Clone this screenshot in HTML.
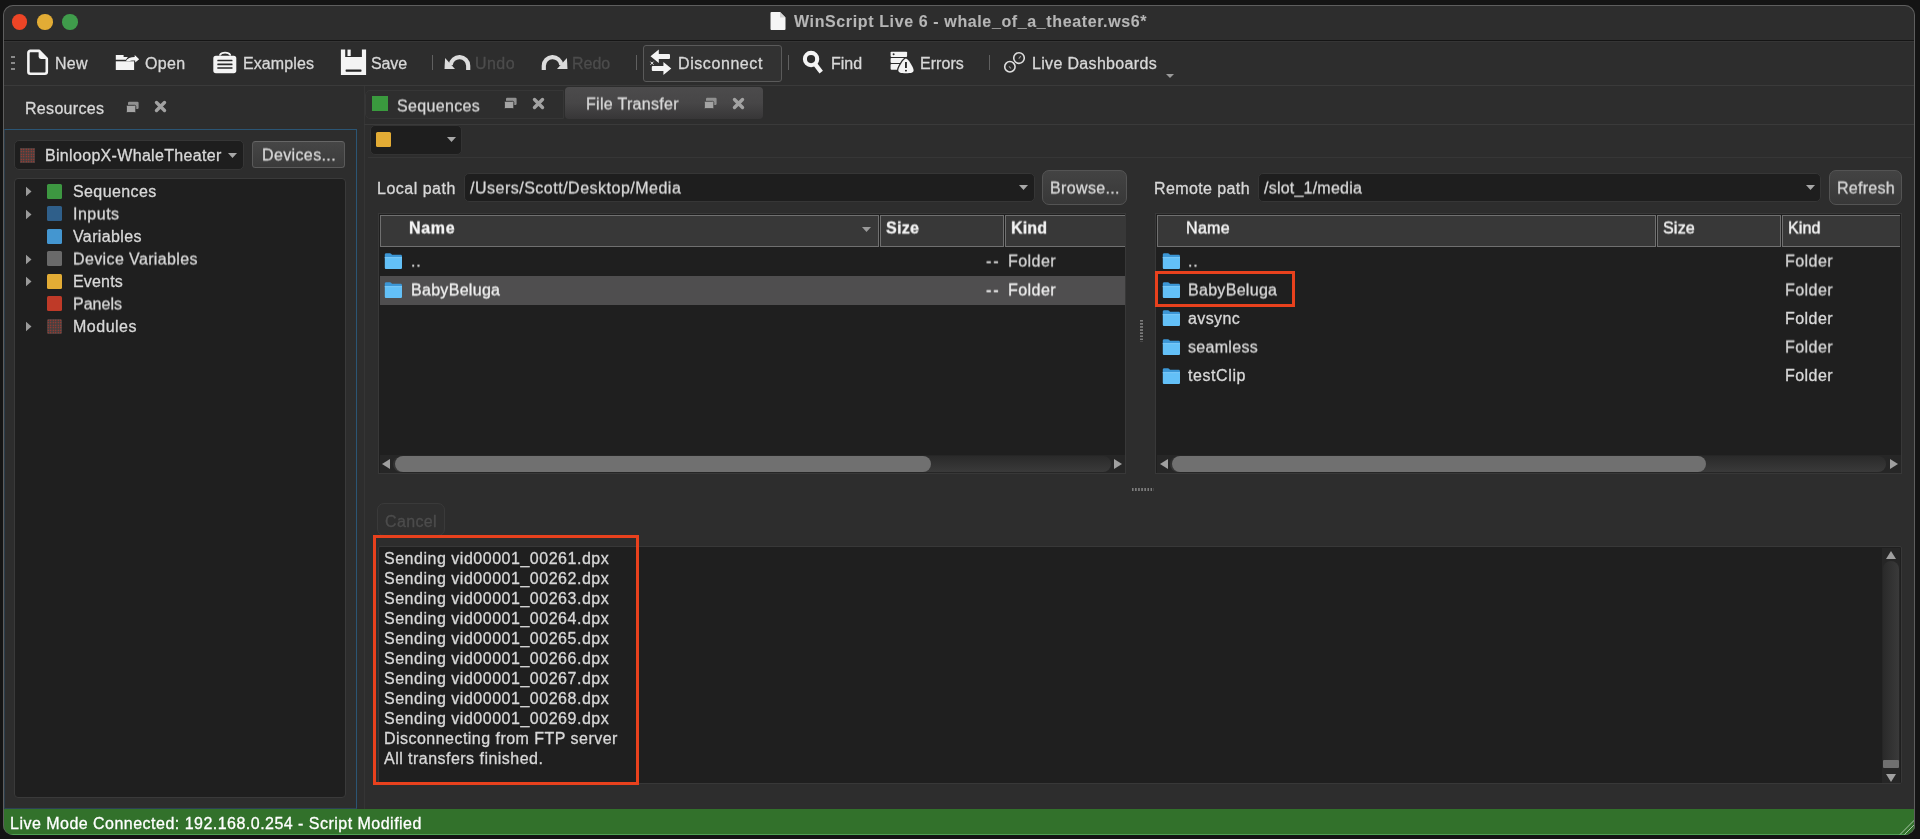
<!DOCTYPE html>
<html>
<head>
<meta charset="utf-8">
<title>WinScript Live 6</title>
<style>
*{box-sizing:border-box;margin:0;padding:0}
html,body{width:1920px;height:839px;overflow:hidden;background:#141414;font-family:"Liberation Sans",sans-serif;color:#dcdcdc}
#c{position:absolute;left:0;top:0;width:1920px;height:839px;clip-path:inset(5px 5px 4px 3px round 10px)}
#c div,#c svg{position:absolute}
.t{will-change:transform;-webkit-text-stroke:0.3px currentColor}
.t{white-space:nowrap;font-size:16px;line-height:20px;height:20px;color:#d8d8d8}
.b{font-weight:700}
.tb{top:54px}
.h5{transform:translateY(0.5px) perspective(1000px) translateZ(0.001px)}
.dim{color:#4c4c4c}
.field{background:#1e1e1e;border:1px solid #363636;border-radius:5px}
.btn{background:#3b3b3b;border:1px solid #4a4a4a;border-radius:7px}
.list{background:#1f1f1f;border:1px solid #3a3a3a}
.hdr{background:#383838;border:1px solid #707070;height:32px;top:215px}
.ln{background:#3b3b3b;height:1px}
#winb{position:absolute;left:3px;top:5px;width:1912px;height:830px;border-radius:10px;border:1px solid #5e5e5e;border-bottom:none}
</style>
</head>
<body>
<div id="c">
<div id="bg" style="left:3px;top:5px;width:1912px;height:830px;background:#2d2d2d"></div>
<div style="left:3px;top:40px;width:1912px;height:1px;background:#151515"></div>
<div style="left:3px;top:41px;width:1912px;height:1px;background:#353535"></div>
<div style="left:12px;top:14.4px;width:15.4px;height:15.4px;border-radius:50%;background:#ed4526"></div>
<div style="left:37.2px;top:14.4px;width:15.4px;height:15.4px;border-radius:50%;background:#e2ac35"></div>
<div style="left:62.2px;top:14.4px;width:15.4px;height:15.4px;border-radius:50%;background:#3f9c4b"></div>
<svg style="left:770px;top:11px" width="17" height="20" viewBox="0 0 17 20"><path d="M1.5 1h8.5l5.5 5.5V18a1 1 0 0 1-1 1H1.5a1 1 0 0 1-1-1V2a1 1 0 0 1 1-1z" fill="#f6f6f6"/><path d="M10 1v5.5h5.5z" fill="#d4d4d4"/></svg>
<div class="t b" style="left:794px;top:12px;color:#b6b6b6;-webkit-text-stroke:0.1px #b6b6b6;letter-spacing:0.62px">WinScript Live 6 - whale_of_a_theater.ws6*</div>

<div class="ln" style="left:3px;top:85px;width:1912px;background:#3a3a3a"></div>
<div style="left:10.500px;top:55.500px;width:4.500px;height:2px;background:#8a8a8a"></div>
<div style="left:10.500px;top:62px;width:4.500px;height:2px;background:#8a8a8a"></div>
<div style="left:10.500px;top:68.200px;width:4.500px;height:2px;background:#8a8a8a"></div>
<!-- New -->
<svg style="left:26px;top:48px" width="24" height="29" viewBox="0 0 24 29"><path d="M4.400 2.900H13.200L20.800 10.700V23.800a2 2 0 0 1-2 2H4.400a2 2 0 0 1-2-2V4.900a2 2 0 0 1 2-2z" fill="none" stroke="#f4f4f4" stroke-width="2.600" stroke-linejoin="round"/><path d="M12.600 2.600V8.600a2.400 2.400 0 0 0 2.400 2.400H21z" fill="#f4f4f4"/></svg>
<div class="t tb" style="left:55px;letter-spacing:0.3px">New</div>
<!-- Open -->
<svg style="left:114px;top:52px" width="27" height="20" viewBox="0 0 27 20"><path d="M1.800 3H9.600V5H13.900L11.900 7.700H1.800z" fill="#f4f4f4"/><rect x="1.800" y="9.300" width="18.300" height="8.700" fill="#f4f4f4"/><path d="M11.800 9.300C13.400 6.200 16.600 5 20.700 5V2.900L25.200 7.200L21.200 10.600V8.500C18.600 8.200 16.200 8.500 14.800 9.300z" fill="#f4f4f4"/></svg>
<div class="t tb" style="left:145px;letter-spacing:0.35px">Open</div>
<!-- Examples -->
<svg style="left:212px;top:50px" width="27" height="25" viewBox="0 0 27 25"><path d="M8 4.900C9.500 1.800 16.700 1.800 18.200 4.900" fill="none" stroke="#f4f4f4" stroke-width="1.700" stroke-linecap="round"/><rect x="1.300" y="5.800" width="23" height="17.400" rx="2.600" fill="#f4f4f4"/><rect x="5.300" y="9.700" width="15.200" height="1.600" rx=".5" fill="#2a2a2a"/><rect x="5.300" y="13.600" width="15.200" height="1.600" rx=".5" fill="#2a2a2a"/><rect x="5.300" y="17.100" width="15.200" height="1.900" rx=".5" fill="#5a5a5a"/></svg>
<div class="t tb" style="left:243px;letter-spacing:0.1px">Examples</div>
<!-- Save -->
<svg style="left:340px;top:49px" width="27" height="27" viewBox="0 0 27 27"><path d="M.900 .600H5.200V7.900H21.900V.600H26.100V26H.900z" fill="#f4f4f4"/><rect x="7.500" y=".600" width="3.200" height="6.400" fill="#f4f4f4"/><rect x="5.600" y="20.500" width="15.900" height="2.200" rx=".6" fill="#242424"/></svg>
<div class="t tb" style="left:371px;letter-spacing:-0.1px">Save</div>
<div style="left:432px;top:55px;width:1.200px;height:15px;background:#606060"></div>
<!-- Undo -->
<svg style="left:443px;top:53px" width="29" height="19" viewBox="0 0 29 19"><path d="M25.200 16.900V12.800A8.8 8.8 0 0 0 7.65 12" fill="none" stroke="#dcdcdc" stroke-width="4.200"/><path d="M2.100 5L1.500 15.900H12z" fill="#dcdcdc"/></svg>
<div class="t tb dim" style="left:475px;letter-spacing:0.45px">Undo</div>
<!-- Redo -->
<svg style="left:540px;top:53px" width="29" height="19" viewBox="0 0 29 19"><g transform="translate(29,0) scale(-1,1)"><path d="M25.200 16.900V12.800A8.8 8.8 0 0 0 7.65 12" fill="none" stroke="#dcdcdc" stroke-width="4.200"/><path d="M2.100 5L1.500 15.900H12z" fill="#dcdcdc"/></g></svg>
<div class="t tb dim" style="left:572px;letter-spacing:0px">Redo</div>
<div style="left:636px;top:55px;width:1.200px;height:15px;background:#606060"></div>
<!-- Disconnect -->
<div style="left:643px;top:45px;width:139px;height:36.500px;background:#323232;border:1px solid #5a5a5a;border-radius:3px"></div>
<svg style="left:649px;top:48px" width="25" height="29" viewBox="0 0 25 29"><path d="M1.500 8.300L9.800 1.600V6H20a1 1 0 0 1 1 1V10a1 1 0 0 1-1 1H9.800V14.900z" fill="#f4f4f4"/><path d="M22.300 20.500L14.400 13.900V18H3.800a1 1 0 0 0-1 1V22a1 1 0 0 0 1 1H14.400V27.100z" fill="#f4f4f4"/><path d="M1.500 13.700l3 3M4.500 13.700l-3 3" stroke="#f0f0f0" stroke-width="1"/></svg>
<div class="t tb" style="left:678px;letter-spacing:0.58px">Disconnect</div>
<div style="left:788px;top:55px;width:1.200px;height:15px;background:#606060"></div>
<!-- Find -->
<svg style="left:801px;top:49px" width="25" height="27" viewBox="0 0 25 27"><circle cx="10.050" cy="10.050" r="6.150" fill="none" stroke="#f4f4f4" stroke-width="4.100"/><path d="M13.800 14.600L20.200 23.100" stroke="#f4f4f4" stroke-width="4.300"/></svg>
<div class="t tb" style="left:831px">Find</div>
<!-- Errors -->
<svg style="left:889px;top:50px" width="26" height="25" viewBox="0 0 26 25"><rect x="1.600" y="1.700" width="16.500" height="5.200" rx=".9" fill="#f4f4f4"/><rect x="1.600" y="7.900" width="16.500" height="5" rx=".9" fill="#f4f4f4"/><rect x="1.600" y="14" width="16.500" height="5.700" rx=".9" fill="#f4f4f4"/><circle cx="4.600" cy="4.300" r="1" fill="#2a2a2a"/><path d="M16.900 8.600C19.300 8.600 24.600 17.800 24.600 20.300C24.600 22.700 22 23.300 16.900 23.300C11.800 23.300 9.300 22.700 9.300 20.300C9.300 17.800 14.600 8.600 16.900 8.600z" fill="#f4f4f4" stroke="#2d2d2d" stroke-width="2.600" paint-order="stroke"/><rect x="16" y="12" width="1.900" height="6" fill="#2a2a2a"/><rect x="16" y="19.900" width="1.900" height="1.500" fill="#2a2a2a"/></svg>
<div class="t tb" style="left:920px;letter-spacing:0.05px">Errors</div>
<div style="left:989px;top:55px;width:1.200px;height:15px;background:#606060"></div>
<!-- Live Dashboards -->
<svg style="left:1002px;top:50px" width="25" height="24" viewBox="0 0 25 24"><circle cx="17" cy="8.050" r="5.300" fill="none" stroke="#dedede" stroke-width="1.600"/><circle cx="7.900" cy="16.750" r="5.200" fill="none" stroke="#dedede" stroke-width="1.600"/><path d="M16.700 8.600l2.100-2.400" stroke="#a0a0a0" stroke-width="1.100"/><path d="M7 16.300l2 2.200" stroke="#a0a0a0" stroke-width="1.100"/></svg>
<div class="t tb" style="left:1032px;letter-spacing:0.33px">Live Dashboards</div>
<svg style="left:1165px;top:73px" width="10" height="6" viewBox="0 0 10 6"><path d="M1 1h8L5 5z" fill="#9a9a9a"/></svg>

<div class="t" style="left:25px;top:99px;letter-spacing:0.31px">Resources</div>
<svg style="left:124.500px;top:100.700px" width="14" height="13" viewBox="0 0 14 13"><rect x="3" y=".8" width="10.600" height="7.200" rx="1.200" fill="#909090"/><rect x="1.400" y="4.300" width="9.400" height="7.300" rx="1.200" fill="#a4a4a4" stroke="#2d2d2d" stroke-width=".9"/></svg>
<svg style="left:154px;top:100.400px" width="13" height="13" viewBox="0 0 13 13"><path d="M2.500 2.500l8 8M10.500 2.500l-8 8" stroke="#a2a2a2" stroke-width="3.400" stroke-linecap="round"/></svg>
<div style="left:4px;top:129px;width:353px;height:680px;border:1px solid #2b5574;border-left-color:#2d3e4c;border-bottom-color:#2d4254"></div>
<div class="field" style="left:14px;top:140px;width:229.500px;height:30px"></div>
<div style="left:20px;top:147.500px;width:15px;height:15px;background-color:#463f3f;background-image:radial-gradient(circle,#c8382a 0.500px,rgba(200,56,42,0) 0.900px);background-size:2.500px 2.500px"></div>
<div class="t" style="left:45px;top:146px;letter-spacing:0.32px">BinloopX-WhaleTheater</div>
<svg style="left:227px;top:151.500px" width="11" height="7" viewBox="0 0 11 7"><path d="M1 1h9L5.500 6z" fill="#a8a8a8"/></svg>
<div class="btn" style="left:252.300px;top:140.800px;width:92.700px;height:26.800px;border-radius:3.500px;background:linear-gradient(#464646,#3a3a3a);border-color:#5a5a5a;border-top-color:#666"></div>
<div class="t h5" style="left:262px;top:145px;letter-spacing:0.37px">Devices...</div>
<div class="list" style="left:14px;top:177.500px;width:332px;height:620px;border-radius:4px"></div>
<svg style="left:25px;top:186.2px" width="8" height="11" viewBox="0 0 8 11"><path d="M1 .7l5.500 4.800-5.500 4.800z" fill="#9a9a9a"/></svg>
<div style="left:47.400px;top:183.9px;width:15px;height:15px;background:#3d9741;border-radius:1.500px"></div>
<div class="t" style="left:72.500px;top:182px;letter-spacing:0.4px">Sequences</div>
<svg style="left:25px;top:208.7px" width="8" height="11" viewBox="0 0 8 11"><path d="M1 .7l5.500 4.800-5.500 4.800z" fill="#9a9a9a"/></svg>
<div style="left:47.400px;top:206.4px;width:15px;height:15px;background:#2f5f8a;border-radius:1.500px"></div>
<div class="t h5" style="left:72.500px;top:204px;letter-spacing:0.5px">Inputs</div>
<div style="left:47.400px;top:228.9px;width:15px;height:15px;background:#4496d0;border-radius:1.500px"></div>
<div class="t" style="left:72.500px;top:227px;letter-spacing:0.38px">Variables</div>
<svg style="left:25px;top:253.7px" width="8" height="11" viewBox="0 0 8 11"><path d="M1 .7l5.500 4.800-5.500 4.800z" fill="#9a9a9a"/></svg>
<div style="left:47.400px;top:251.4px;width:15px;height:15px;background:#6a6a6a;border-radius:1.500px"></div>
<div class="t h5" style="left:72.500px;top:249px;letter-spacing:0.38px">Device Variables</div>
<svg style="left:25px;top:276.2px" width="8" height="11" viewBox="0 0 8 11"><path d="M1 .7l5.500 4.800-5.500 4.800z" fill="#9a9a9a"/></svg>
<div style="left:47.400px;top:273.9px;width:15px;height:15px;background:#e3ac35;border-radius:1.500px"></div>
<div class="t" style="left:72.500px;top:272px;letter-spacing:0.18px">Events</div>
<div style="left:47.400px;top:296.4px;width:15px;height:15px;background:#bf3a28;border-radius:1.500px"></div>
<div class="t h5" style="left:72.500px;top:294px;letter-spacing:0.02px">Panels</div>
<svg style="left:25px;top:321.2px" width="8" height="11" viewBox="0 0 8 11"><path d="M1 .7l5.500 4.800-5.500 4.800z" fill="#9a9a9a"/></svg>
<div style="left:47.400px;top:318.9px;width:15px;height:15px;background-color:#463f3f;background-image:radial-gradient(circle,#c8382a 0.500px,rgba(200,56,42,0) 0.900px);background-size:2.500px 2.500px;border-radius:1.500px"></div>
<div class="t" style="left:72.500px;top:317px;letter-spacing:0.5px">Modules</div>

<div style="left:363.500px;top:86px;width:1px;height:723px;background:#353535"></div>
<div style="left:365px;top:90px;width:199px;height:29px;border:1px solid #363636;border-radius:5px 0 0 5px;background:#2e2e2e"></div>
<div style="left:564.500px;top:87px;width:198.500px;height:32px;background:linear-gradient(#4c4b4c,#474647 50%,#373637);border-radius:4px"></div>
<div style="left:372px;top:96px;width:15.500px;height:15px;background:#3a9a3e"></div>
<div class="t h5" style="left:397px;top:96px;letter-spacing:0.33px">Sequences</div>
<svg style="left:503px;top:97px" width="14" height="13" viewBox="0 0 14 13"><rect x="3" y=".8" width="10.600" height="7.200" rx="1.200" fill="#909090"/><rect x="1.400" y="4.300" width="9.400" height="7.300" rx="1.200" fill="#a4a4a4" stroke="#2d2d2d" stroke-width=".9"/></svg>
<svg style="left:532px;top:97px" width="13" height="13" viewBox="0 0 13 13"><path d="M2.500 2.500l8 8M10.500 2.500l-8 8" stroke="#a2a2a2" stroke-width="3.400" stroke-linecap="round"/></svg>
<div class="t h5" style="left:586px;top:94px;letter-spacing:0.31px">File Transfer</div>
<svg style="left:703px;top:97.200px" width="14" height="13" viewBox="0 0 14 13"><rect x="3" y=".8" width="10.600" height="7.200" rx="1.200" fill="#909090"/><rect x="1.400" y="4.300" width="9.400" height="7.300" rx="1.200" fill="#a4a4a4" stroke="#444" stroke-width=".9"/></svg>
<svg style="left:732px;top:97px" width="13" height="13" viewBox="0 0 13 13"><path d="M2.500 2.500l8 8M10.500 2.500l-8 8" stroke="#a2a2a2" stroke-width="3.400" stroke-linecap="round"/></svg>
<div class="ln" style="left:364px;top:123.500px;width:1551px;background:#3a3a3a"></div>
<div class="field" style="left:370px;top:125px;width:92px;height:30px;border-color:#333"></div>
<div style="left:376px;top:132px;width:15px;height:15.300px;background:#e3ac35;border-radius:1.500px"></div>
<svg style="left:446px;top:136px" width="11" height="7" viewBox="0 0 11 7"><path d="M1 1h9L5.500 6z" fill="#a8a8a8"/></svg>
<div class="ln" style="left:368px;top:157px;width:1544px;background:#363636"></div>

<div class="t" style="left:377px;top:179px;letter-spacing:0.5px">Local path</div>
<div class="field" style="left:463.500px;top:172.500px;width:571px;height:29.500px"></div>
<div class="t h5" style="left:469.500px;top:178px;letter-spacing:0.5px">/Users/Scott/Desktop/Media</div>
<svg style="left:1018px;top:184px" width="11" height="7" viewBox="0 0 11 7"><path d="M1 1h9L5.500 6z" fill="#a8a8a8"/></svg>
<div class="btn" style="left:1042px;top:170px;width:85px;height:34.500px;background:linear-gradient(#434343,#383838);border-color:#545454"></div>
<div class="t h5" style="left:1050px;top:178px;letter-spacing:0.36px">Browse...</div>
<div class="list" style="left:378px;top:213px;width:748px;height:261px;border-color:#383838"></div>
<div class="hdr" style="left:380px;width:499px"></div>
<div class="hdr" style="left:880px;width:124px"></div>
<div class="hdr" style="left:1005px;width:120px;border-right:none"></div>
<div class="t b h5" style="left:408.500px;top:218px;color:#f4f4f4;letter-spacing:0.65px">Name</div>
<div class="t b h5" style="left:886px;top:218px;color:#f4f4f4;letter-spacing:0.3px">Size</div>
<div class="t b h5" style="left:1011px;top:218px;color:#f4f4f4;letter-spacing:0.15px">Kind</div>
<svg style="left:861px;top:225.500px" width="11" height="7" viewBox="0 0 11 7"><path d="M1 1h9L5.500 6z" fill="#9a9a9a"/></svg>
<div style="left:380px;top:275.500px;width:745px;height:29.500px;background:#4f4e4f"></div>
<svg style="left:384px;top:252px" width="19" height="18" viewBox="0 0 19 18"><path d="M.8 2.700c0-.8.600-1.400 1.400-1.400h3.700c.5 0 .9.200 1.200.5l.9 1h8.600c.8 0 1.400.6 1.400 1.400v2H.8z" fill="#3c97d6"/><path d="M.8 5.200h17.200v10.500c0 .8-.600 1.400-1.400 1.400H2.200c-.8 0-1.400-.6-1.400-1.400z" fill="#63c0f7"/><path d="M.8 5.200h17.200v.9H.8z" fill="#7fcbf8"/></svg>
<svg style="left:384px;top:280.5px" width="19" height="18" viewBox="0 0 19 18"><path d="M.8 2.700c0-.8.600-1.400 1.400-1.400h3.700c.5 0 .9.200 1.200.5l.9 1h8.600c.8 0 1.400.6 1.400 1.400v2H.8z" fill="#3c97d6"/><path d="M.8 5.200h17.200v10.500c0 .8-.600 1.400-1.400 1.400H2.200c-.8 0-1.400-.6-1.400-1.400z" fill="#63c0f7"/><path d="M.8 5.200h17.200v.9H.8z" fill="#7fcbf8"/></svg>
<div class="t h5" style="left:411px;top:251px;letter-spacing:0.8px">..</div>
<div class="t h5" style="left:411px;top:280px;letter-spacing:0.3px;color:#f0f0f0">BabyBeluga</div>
<div class="t h5" style="left:986px;top:251px;letter-spacing:2px">--</div>
<div class="t h5" style="left:1008px;top:251px;letter-spacing:0.44px">Folder</div>
<div class="t h5" style="left:986px;top:280px;letter-spacing:2px;color:#f0f0f0">--</div>
<div class="t h5" style="left:1008px;top:280px;letter-spacing:0.44px;color:#f0f0f0">Folder</div>
<!-- hscroll -->
<div style="left:380px;top:455px;width:745px;height:18px;background:#262626"></div>
<div style="left:393px;top:456px;width:718px;height:16px;border-radius:8px;background:linear-gradient(#2a2a2a,#3a3a3a)"></div>
<div style="left:395px;top:456px;width:536px;height:16px;border-radius:8px;background:#707070"></div>
<svg style="left:381px;top:458px" width="10" height="12" viewBox="0 0 10 12"><path d="M9 1v10L1 6z" fill="#a0a0a0"/></svg>
<svg style="left:1113px;top:458px" width="10" height="12" viewBox="0 0 10 12"><path d="M1 1v10l8-5z" fill="#a0a0a0"/></svg>
<!-- splitters -->
<div style="left:1140px;top:319.500px;width:3px;height:22px;background-image:linear-gradient(#7c7c7c 1.500px,rgba(0,0,0,0) 1.500px);background-size:3px 3.100px"></div>
<div style="left:1132px;top:488px;width:22px;height:3px;background-image:linear-gradient(90deg,#7c7c7c 1.500px,rgba(0,0,0,0) 1.500px);background-size:3.100px 3px"></div>

<div class="t" style="left:1154px;top:179px;letter-spacing:0.4px">Remote path</div>
<div class="field" style="left:1257.500px;top:172.500px;width:563px;height:29.500px"></div>
<div class="t h5" style="left:1263.500px;top:178px;letter-spacing:0.22px">/slot_1/media</div>
<svg style="left:1805px;top:184px" width="11" height="7" viewBox="0 0 11 7"><path d="M1 1h9L5.500 6z" fill="#a8a8a8"/></svg>
<div class="btn" style="left:1829px;top:170px;width:73px;height:34.500px;background:linear-gradient(#434343,#383838);border-color:#545454"></div>
<div class="t h5" style="left:1837px;top:178px;letter-spacing:0.28px">Refresh</div>
<div class="list" style="left:1155px;top:213px;width:747px;height:261px;border-color:#383838"></div>
<div class="hdr" style="left:1157px;width:499px"></div>
<div class="hdr" style="left:1657px;width:124px"></div>
<div class="hdr" style="left:1782px;width:118px;border-right:none"></div>
<div class="t h5" style="left:1186px;top:218px;color:#f4f4f4;letter-spacing:0.33px;-webkit-text-stroke:0.45px #f4f4f4">Name</div>
<div class="t h5" style="left:1663px;top:218px;color:#f4f4f4;letter-spacing:0.2px;-webkit-text-stroke:0.45px #f4f4f4">Size</div>
<div class="t h5" style="left:1788px;top:218px;color:#f4f4f4;letter-spacing:0.1px;-webkit-text-stroke:0.45px #f4f4f4">Kind</div>
<svg style="left:1161.5px;top:252.1px" width="19" height="18" viewBox="0 0 19 18"><path d="M.8 2.700c0-.8.600-1.400 1.400-1.400h3.700c.5 0 .9.200 1.200.5l.9 1h8.600c.8 0 1.400.6 1.400 1.400v2H.8z" fill="#3c97d6"/><path d="M.8 5.200h17.200v10.500c0 .8-.600 1.400-1.400 1.400H2.200c-.8 0-1.400-.6-1.400-1.400z" fill="#63c0f7"/><path d="M.8 5.200h17.200v.9H.8z" fill="#7fcbf8"/></svg>
<div class="t h5" style="left:1188px;top:251px;letter-spacing:0.8px">..</div>
<div class="t h5" style="left:1784.800px;top:251px;letter-spacing:0.44px">Folder</div>
<svg style="left:1161.5px;top:280.7px" width="19" height="18" viewBox="0 0 19 18"><path d="M.8 2.700c0-.8.600-1.400 1.400-1.400h3.700c.5 0 .9.200 1.200.5l.9 1h8.600c.8 0 1.400.6 1.400 1.400v2H.8z" fill="#3c97d6"/><path d="M.8 5.200h17.200v10.500c0 .8-.600 1.400-1.400 1.400H2.200c-.8 0-1.400-.6-1.400-1.400z" fill="#63c0f7"/><path d="M.8 5.200h17.200v.9H.8z" fill="#7fcbf8"/></svg>
<div class="t h5" style="left:1188px;top:280px;letter-spacing:0.3px">BabyBeluga</div>
<div class="t h5" style="left:1784.800px;top:280px;letter-spacing:0.44px">Folder</div>
<svg style="left:1161.5px;top:309.3px" width="19" height="18" viewBox="0 0 19 18"><path d="M.8 2.700c0-.8.600-1.400 1.400-1.400h3.700c.5 0 .9.200 1.200.5l.9 1h8.600c.8 0 1.400.6 1.400 1.400v2H.8z" fill="#3c97d6"/><path d="M.8 5.200h17.200v10.500c0 .8-.600 1.400-1.400 1.400H2.200c-.8 0-1.400-.6-1.400-1.400z" fill="#63c0f7"/><path d="M.8 5.200h17.200v.9H.8z" fill="#7fcbf8"/></svg>
<div class="t" style="left:1188px;top:309px;letter-spacing:0.37px">avsync</div>
<div class="t" style="left:1784.800px;top:309px;letter-spacing:0.44px">Folder</div>
<svg style="left:1161.5px;top:337.9px" width="19" height="18" viewBox="0 0 19 18"><path d="M.8 2.700c0-.8.600-1.400 1.400-1.400h3.700c.5 0 .9.200 1.200.5l.9 1h8.600c.8 0 1.400.6 1.400 1.400v2H.8z" fill="#3c97d6"/><path d="M.8 5.200h17.200v10.500c0 .8-.600 1.400-1.400 1.400H2.200c-.8 0-1.400-.6-1.400-1.400z" fill="#63c0f7"/><path d="M.8 5.200h17.200v.9H.8z" fill="#7fcbf8"/></svg>
<div class="t h5" style="left:1188px;top:337px;letter-spacing:0.3px">seamless</div>
<div class="t h5" style="left:1784.800px;top:337px;letter-spacing:0.44px">Folder</div>
<svg style="left:1161.5px;top:366.5px" width="19" height="18" viewBox="0 0 19 18"><path d="M.8 2.700c0-.8.600-1.400 1.400-1.400h3.700c.5 0 .9.200 1.200.5l.9 1h8.600c.8 0 1.400.6 1.400 1.400v2H.8z" fill="#3c97d6"/><path d="M.8 5.200h17.200v10.500c0 .8-.600 1.400-1.400 1.400H2.200c-.8 0-1.400-.6-1.400-1.400z" fill="#63c0f7"/><path d="M.8 5.200h17.200v.9H.8z" fill="#7fcbf8"/></svg>
<div class="t" style="left:1188px;top:366px;letter-spacing:0.58px">testClip</div>
<div class="t" style="left:1784.800px;top:366px;letter-spacing:0.44px">Folder</div>
<div style="left:1155px;top:270.500px;width:140px;height:36.500px;border:3.500px solid #e8411d"></div>
<div style="left:1157px;top:455px;width:744px;height:18px;background:#262626"></div>
<div style="left:1170px;top:456px;width:716px;height:16px;border-radius:8px;background:linear-gradient(#2a2a2a,#3a3a3a)"></div>
<div style="left:1171.500px;top:456px;width:534.500px;height:16px;border-radius:8px;background:#707070"></div>
<svg style="left:1158.500px;top:458px" width="10" height="12" viewBox="0 0 10 12"><path d="M9 1v10L1 6z" fill="#a0a0a0"/></svg>
<svg style="left:1888.500px;top:458px" width="10" height="12" viewBox="0 0 10 12"><path d="M1 1v10l8-5z" fill="#a0a0a0"/></svg>

<div style="left:377px;top:503px;width:67.500px;height:33px;border:1px solid #3a3a3a;border-radius:7px;background:#2f2f2f"></div>
<div class="t dim" style="left:385px;top:512px;letter-spacing:0.36px">Cancel</div>
<div class="list" style="left:377.500px;top:546px;width:1524.500px;height:238px;border-color:#383838;border-radius:2px"></div>
<div class="t" style="left:383.500px;top:549px;letter-spacing:0.52px">Sending vid00001_00261.dpx</div>
<div class="t" style="left:383.500px;top:569px;letter-spacing:0.52px">Sending vid00001_00262.dpx</div>
<div class="t" style="left:383.500px;top:589px;letter-spacing:0.52px">Sending vid00001_00263.dpx</div>
<div class="t" style="left:383.500px;top:609px;letter-spacing:0.52px">Sending vid00001_00264.dpx</div>
<div class="t" style="left:383.500px;top:629px;letter-spacing:0.52px">Sending vid00001_00265.dpx</div>
<div class="t" style="left:383.500px;top:649px;letter-spacing:0.52px">Sending vid00001_00266.dpx</div>
<div class="t" style="left:383.500px;top:669px;letter-spacing:0.52px">Sending vid00001_00267.dpx</div>
<div class="t" style="left:383.500px;top:689px;letter-spacing:0.52px">Sending vid00001_00268.dpx</div>
<div class="t" style="left:383.500px;top:709px;letter-spacing:0.52px">Sending vid00001_00269.dpx</div>
<div class="t" style="left:383.500px;top:729px;letter-spacing:0.47px">Disconnecting from FTP server</div>
<div class="t" style="left:383.500px;top:749px;letter-spacing:0.47px">All transfers finished.</div>
<div style="left:372.500px;top:534.500px;width:266.500px;height:250.500px;border:3.500px solid #e8411d"></div>
<div style="left:1881.500px;top:548px;width:18.500px;height:235px;background:#262626"></div>
<div style="left:1883px;top:561px;width:16px;height:207px;border-radius:8px;background:linear-gradient(90deg,#2a2a2a,#3a3a3a)"></div>
<div style="left:1883px;top:760px;width:16px;height:8px;background:#707070;border-radius:1px"></div>
<svg style="left:1884.500px;top:549.500px" width="12" height="10" viewBox="0 0 12 10"><path d="M1 9h10L6 1z" fill="#a0a0a0"/></svg>
<svg style="left:1884.500px;top:772.500px" width="12" height="10" viewBox="0 0 12 10"><path d="M1 1h10L6 9z" fill="#a0a0a0"/></svg>

<div style="left:3px;top:809px;width:1912px;height:26px;background:#32712b;border-bottom:1px solid #4fa254;border-right:1px solid #4fa254"></div>
<div class="t" style="left:10px;top:814px;color:#ffffff;letter-spacing:0.48px">Live Mode Connected: 192.168.0.254 - Script Modified</div>
<svg style="left:1895px;top:815px" width="20" height="20" viewBox="0 0 20 20"><path d="M5 19.500L19.500 5M9.500 19.500L19.500 9.500" stroke="#a9c7a8" stroke-width="1"/></svg>

</div>
<div id="winb"></div>
</body>
</html>
